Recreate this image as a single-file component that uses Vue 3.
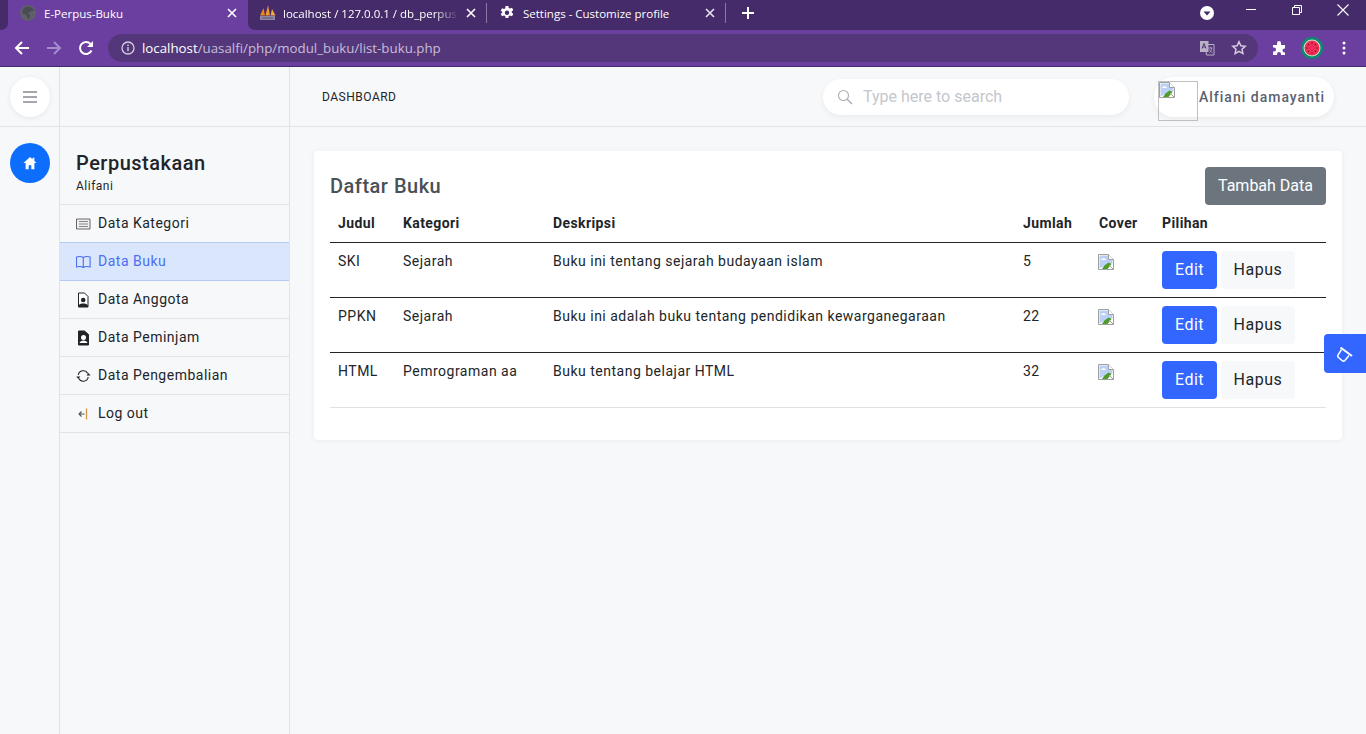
<template>
  <div class="window">
    <div class="tabstrip">
      <div class="stub"></div>
      <div class="tab active">
        <svg class="fav" viewBox="0 0 16 16"><circle cx="8" cy="8" r="8" fill="#5f5f69"/><path d="M8 1.500c3 0 5 2 6 4l-4 1-2 2 2 2-1 4-2-3-1-2-3-1-1-2c1-3 3-5 6-5z" fill="#4b4b55"/></svg>
        <span class="tab-title">E-Perpus-Buku</span>
        <svg class="tab-x" viewBox="0 0 10 10"><path d="M1 1l8 8M9 1l-8 8" stroke="#fff" stroke-width="1.6"/></svg>
      </div>
      <div class="tabs-rest">
        <div class="tab">
          <svg class="fav wide" viewBox="0 0 17 16"><path d="M1 10.500L4.500 3l1.500 7.500z" fill="#e8871e"/><path d="M6.500 10.500L9 0l2 10.500z" fill="#f39a2a"/><path d="M11.500 10.500L13 4l3.500 6.500z" fill="#f6a93c"/><path d="M1 11h15v4H1z" fill="#8f86a0"/><path d="M3 13h11" stroke="#5d5276"/></svg>
          <span class="tab-title fade">localhost / 127.0.0.1 / db_perpus</span>
          <svg class="tab-x" viewBox="0 0 10 10"><path d="M1 1l8 8M9 1l-8 8" stroke="#fff" stroke-width="1.6"/></svg>
        </div>
        <i class="tab-sep"></i>
        <div class="tab">
          <svg class="fav" viewBox="0 0 16 16"><path fill="#fff" fill-rule="evenodd" d="M6.600 1h2.800l.4 2 1.200.6 1.900-.9 1.400 2.400-1.600 1.300v1.200l1.600 1.300-1.400 2.400-1.900-.9-1.200.6-.4 2H6.600l-.4-2-1.200-.6-1.900.9-1.400-2.400 1.600-1.300V6.900L1.700 5.600l1.400-2.400 1.900.9 1.200-.6zM8 5.500a2.200 2.200 0 100 4.400 2.200 2.200 0 000-4.400z"/></svg>
          <span class="tab-title">Settings - Customize profile</span>
          <svg class="tab-x" viewBox="0 0 10 10"><path d="M1 1l8 8M9 1l-8 8" stroke="#e8e4ee" stroke-width="1.6"/></svg>
        </div>
        <i class="tab-sep"></i>
        <svg class="new-tab" viewBox="0 0 12 12"><path d="M6 0v12M0 6h12" stroke="#fff" stroke-width="2"/></svg>
        <div class="caption">
          <svg class="tab-search" viewBox="0 0 14 14"><circle cx="7" cy="7" r="7" fill="#fff"/><path d="M3.500 5.500h7L7 9.500z" fill="#452b69"/></svg>
          <svg class="cap-btn" viewBox="0 0 12 12"><path d="M1 5.500h10" stroke="#fff"/></svg>
          <svg class="cap-btn restore" viewBox="0 0 12 12"><path d="M1.500 3.500h7v7h-7zM3.500 3.500v-2h7v7h-2" fill="none" stroke="#fff"/></svg>
          <svg class="cap-btn close" viewBox="0 0 14 14"><path d="M1.500 1.500l11 11M12.500 1.500l-11 11" stroke="#fff" stroke-width="1.100"/></svg>
        </div>
      </div>
    </div>

    <div class="toolbar">
      <svg class="nav-ico" viewBox="0 0 16 16"><path d="M15 8H2M8 2L2 8l6 6" fill="none" stroke="#fff" stroke-width="2"/></svg>
      <svg class="nav-ico" viewBox="0 0 16 16"><path d="M1 8h13M8 2l6 6-6 6" fill="none" stroke="#a68ccb" stroke-width="2"/></svg>
      <svg class="nav-ico" viewBox="0 0 16 16"><path d="M13.500 10.500A6 6 0 1112.500 4" fill="none" stroke="#fff" stroke-width="2"/><path d="M15 1v6H9z" fill="#fff"/></svg>
      <div class="omnibox">
        <svg class="info" viewBox="0 0 14 14"><circle cx="7" cy="7" r="6" fill="none" stroke="#d6cde2" stroke-width="1.300"/><path d="M7 6v4.200M7 3.500v1.400" stroke="#d6cde2" stroke-width="1.400"/></svg>
        <span class="url"><b>localhost</b>/uasalfi/php/modul_buku/list-buku.php</span>
        <svg class="omni-ico" viewBox="0 0 16 16"><path d="M1 1h8.500v11H1z" fill="#b9afc7"/><path d="M6 4.500h9v10.500H7.500z" fill="none" stroke="#b9afc7"/><path d="M3 8.500l2-5 2 5M3.800 7h2.500" stroke="#54377a" fill="none"/><path d="M9.500 8h4M11.500 7v1M10.500 12.500c1.500-1 2-2.500 2.200-4.500M10.500 9.500c.5 1.500 1.500 2.500 3 3" stroke="#b9afc7" fill="none" stroke-width=".8"/></svg>
        <svg class="omni-ico star" viewBox="0 0 16 16"><path d="M8 1.800l1.900 4 4.300.5-3.200 3 .9 4.300L8 11.400l-3.900 2.200.9-4.300-3.200-3 4.300-.5z" fill="none" stroke="#d6cde2" stroke-width="1.500"/></svg>
      </div>
      <svg class="puzzle" viewBox="0 0 16 16"><path fill="#fff" d="M1 5h4V3a2 2 0 014 0v2h4v3.500h-.5a2 2 0 000 4h.5V15H9v-1a2 2 0 00-4 0v1H1v-3.500h1a2 2 0 000-4H1z"/></svg>
      <svg class="avatar" viewBox="0 0 22 22"><circle cx="11" cy="11" r="11" fill="#0b8a72"/><circle cx="11" cy="11" r="8.500" fill="#cfe8c8"/><circle cx="11" cy="11" r="7.500" fill="#ef2d56"/><g fill="#7a1030"><circle cx="11" cy="6" r=".7"/><circle cx="11" cy="16" r=".7"/><circle cx="6" cy="11" r=".7"/><circle cx="16" cy="11" r=".7"/><circle cx="7.500" cy="7.500" r=".7"/><circle cx="14.500" cy="14.500" r=".7"/><circle cx="14.500" cy="7.500" r=".7"/><circle cx="7.500" cy="14.500" r=".7"/></g></svg>
      <svg class="kebab" viewBox="0 0 4 14"><g fill="#fff"><circle cx="2" cy="2" r="1.500"/><circle cx="2" cy="7" r="1.500"/><circle cx="2" cy="12" r="1.500"/></g></svg>
    </div>

    <div class="page">
      <div class="rail-top">
        <button class="menu-btn">
          <svg viewBox="0 0 14 12" width="14" height="12"><path d="M0 1h14M0 6h14M0 11h14" stroke="#868b94" stroke-width="1.400"/></svg>
        </button>
      </div>
      <div class="side-top"></div>
      <header class="topbar">
        <span class="crumb">DASHBOARD</span>
        <div class="search">
          <svg viewBox="0 0 16 16" width="16" height="16"><circle cx="6.500" cy="6.500" r="5" fill="none" stroke="#a9adb5" stroke-width="1.100"/><path d="M10.200 10.200l4.800 4.800" stroke="#a9adb5" stroke-width="1.300"/></svg>
          <span>Type here to search</span>
        </div>
        <div class="user">
          <span class="user-img"><svg class="broken" viewBox="0 0 16 16"><use href="#broken-img"/></svg></span>
          <span class="user-name">Alfiani damayanti</span>
        </div>
      </header>

      <div class="rail">
        <span class="home">
          <svg viewBox="0 0 16 16" width="14" height="14"><path fill="#fff" d="M8 1l3 2.800V2h2v3.700l2.500 2.300H13v7H9.500v-4.500h-3V15H3V8H.5z"/></svg>
        </span>
      </div>

      <aside class="sidebar">
        <div class="brand">
          <h1>Perpustakaan</h1>
          <small>Alifani</small>
        </div>
        <a v-for="m in menu" :key="m.label" class="menu-item" :class="{ on: m.on }">
          <svg viewBox="0 0 16 16" width="16" height="16" v-html="m.icon"></svg>
          <span>{{ m.label }}</span>
        </a>
      </aside>

      <main class="content">
        <section class="card">
          <div class="card-head">
            <h2>Daftar Buku</h2>
            <button class="btn grey">Tambah Data</button>
          </div>
          <table>
            <colgroup>
              <col style="width: 65px" /><col style="width: 150px" /><col style="width: 470px" /><col style="width: 76px" /><col style="width: 63px" /><col />
            </colgroup>
            <thead>
              <tr><th>Judul</th><th>Kategori</th><th>Deskripsi</th><th>Jumlah</th><th>Cover</th><th>Pilihan</th></tr>
            </thead>
            <tbody>
              <tr v-for="b in books" :key="b.judul">
                <td>{{ b.judul }}</td>
                <td>{{ b.kategori }}</td>
                <td>{{ b.deskripsi }}</td>
                <td>{{ b.jumlah }}</td>
                <td><svg class="broken cover" viewBox="0 0 16 16"><use href="#broken-img"/></svg></td>
                <td class="actions">
                  <button class="btn blue">Edit</button>
                  <button class="btn light">Hapus</button>
                </td>
              </tr>
            </tbody>
          </table>
        </section>
      </main>
    </div>

    <button class="paint">
      <svg viewBox="0 0 16 16" width="16" height="16"><path d="M4.500 3.500L1 9.200q-.7 1.300.5 2.300l3.800 3.200q1.400 1 2.600-.3L12 9.500" fill="none" stroke="#fff" stroke-width="1.500"/><path d="M3.500 1.500L15 10" stroke="#fff" stroke-width="2"/></svg>
    </button>

    <svg width="0" height="0" class="defs">
      <symbol id="broken-img" viewBox="0 0 16 16">
        <path d="M.5.5h10l5 5v10H.5z" fill="#fff" stroke="#a0a0a0"/>
        <path d="M1.500 1.500h9v4h4v4l-5 1-8 4z" fill="#bcd0f5"/>
        <path d="M3 6c1-2.500 4-2.500 5 0z" fill="#fff"/>
        <path d="M4 15l2.500-3.500 4-3 3 1.500-4 5z" fill="#4f9a28"/>
        <path d="M11 11l4 4" stroke="#a0a0a0"/>
        <path d="M10.500.5v5h5" fill="#fff" stroke="#a0a0a0"/>
      </symbol>
    </svg>
  </div>
</template>

<script setup>
const menu = [
  {
    label: "Data Kategori",
    icon: '<path d="M.5 3h13.500v10H.5z" fill="#eee" stroke="#6b6470"/><path d="M3 5.500h9M3 8h9M3 10.500h9" stroke="#8a8590"/>',
  },
  {
    label: "Data Buku",
    on: true,
    icon: '<path d="M7.300 3.500C6 2.700 2.500 2.500.5 3v10c2-.5 5.500-.3 6.800.5 1.300-.8 4.800-1 6.800-.5V3c-2-.5-5.500-.3-6.800.5zM7.300 3.500v10" fill="none" stroke="#4c6ef5" stroke-width="1.100"/>',
  },
  {
    label: "Data Anggota",
    icon: '<path d="M2.500 1h6l3.500 3.500V15h-9.500z" fill="#fff" stroke="#212529"/><circle cx="7.200" cy="8" r="2.300" fill="#212529"/><path d="M2.500 15v-1.500c1-1.500 2.500-2 4.700-2s3.800.5 4.800 2V15z" fill="#212529"/>',
  },
  {
    label: "Data Peminjam",
    icon: '<path d="M2.500 1h6l4 3.500V15h-10z" fill="#212529" stroke="#212529"/><circle cx="7.500" cy="7.500" r="2.500" fill="#fff"/><path d="M3.500 13c.5-1.500 2-2.500 4-2.500s3.500 1 4 2.500z" fill="#fff"/>',
  },
  {
    label: "Data Pengembalian",
    icon: '<path d="M2.300 7a5 5 0 019.400-1.500M12.200 9a5 5 0 01-9.400 1.500" fill="none" stroke="#212529" stroke-width="1.100"/><path d="M10.500 7.500h4l-2-2.500zM.3 8.500h4l-2 2.500z" fill="#212529"/>',
  },
  {
    label: "Log out",
    icon: '<path d="M10.500 2.500v11" stroke="#d8954a" stroke-width="1.300"/><path d="M8.500 8H3M5.500 5.500L3 8l2.500 2.500" fill="none" stroke="#555" stroke-width="1.100"/>',
  },
];

const books = [
  { judul: "SKI", kategori: "Sejarah", deskripsi: "Buku ini tentang sejarah budayaan islam", jumlah: 5 },
  { judul: "PPKN", kategori: "Sejarah", deskripsi: "Buku ini adalah buku tentang pendidikan kewarganegaraan", jumlah: 22 },
  { judul: "HTML", kategori: "Pemrograman aa", deskripsi: "Buku tentang belajar HTML", jumlah: 32 },
];
</script>

<style>
html,
body {
  margin: 0;
  background: #f7f8fa;
}
</style>

<style scoped>
.window {
  position: relative;
  display: flex;
  flex-direction: column;
  height: 100vh;
  overflow: hidden;
  font-family: Roboto, "Liberation Sans", sans-serif;
  font-size: 14px;
  letter-spacing: 0.5px;
  line-height: 21px;
  color: #212529;
  background: #f7f8fa;
}
.defs {
  position: absolute;
}

.tabstrip {
  display: flex;
  flex: none;
  height: 30px;
  background: #6b3fa0;
  font-family: "Open Sans", "Liberation Sans", sans-serif;
  font-size: 11.5px;
  letter-spacing: 0;
  color: #fff;
}
.stub {
  width: 8px;
  background: #452b69;
  border-bottom-right-radius: 7px;
}
.tab {
  display: flex;
  align-items: center;
  flex: none;
  width: 238px;
  height: 30px;
  padding: 0 10px 4px 12px;
  box-sizing: border-box;
}
.tab.active {
  width: 240px;
  padding-right: 11px;
}
.tab-title {
  flex: 1;
  min-width: 0;
  margin-left: 8px;
  white-space: nowrap;
}
.tab-title.fade {
  margin-right: -5px;
  overflow: hidden;
  -webkit-mask-image: linear-gradient(90deg, #000 86%, transparent);
  mask-image: linear-gradient(90deg, #000 86%, transparent);
}
.fav {
  flex: none;
  width: 16px;
  height: 16px;
}
.fav.wide {
  width: 17px;
  margin-right: -1px;
  margin-left: -1px;
}
.tab-x {
  flex: none;
  width: 10px;
  height: 10px;
  margin-left: 12px;
}
.tabs-rest {
  flex: 1;
  display: flex;
  align-items: center;
  padding-bottom: 4px;
  height: 30px;
  box-sizing: border-box;
  background: #452b69;
  border-bottom-left-radius: 7px;
}
.tabs-rest .tab {
  height: 26px;
  padding-bottom: 0;
}
.tab-sep {
  flex: none;
  width: 1px;
  height: 20px;
  background: #8b77a8;
}
.new-tab {
  width: 12px;
  height: 12px;
  margin-left: 16px;
}
.caption {
  display: flex;
  align-items: center;
  margin-left: auto;
}
.tab-search {
  width: 14px;
  height: 14px;
  margin-right: 31px;
}
.cap-btn {
  width: 12px;
  height: 12px;
  margin-right: 34px;
  margin-top: -6px;
}
.cap-btn.restore {
  margin-right: 33px;
}
.cap-btn.close {
  width: 14px;
  height: 14px;
  margin-right: 16px;
}

.toolbar {
  display: flex;
  align-items: center;
  flex: none;
  height: 37px;
  box-sizing: border-box;
  padding: 0 0 1px 14px;
  background: #6b3fa0;
  border-bottom: 1px solid #452b69;
}
.nav-ico {
  flex: none;
  width: 16px;
  height: 16px;
  margin-right: 16px;
}
.omnibox {
  display: flex;
  align-items: center;
  flex: none;
  width: 1150px;
  height: 28px;
  margin-left: -2px;
  padding: 0 11px 0 13px;
  box-sizing: border-box;
  border-radius: 14px;
  background: #54377a;
  font-family: "Open Sans", "Liberation Sans", sans-serif;
  font-size: 13.3px;
  letter-spacing: 0;
  color: #c9bdd9;
}
.info {
  flex: none;
  width: 14px;
  height: 14px;
  margin-right: 7px;
}
.url {
  flex: 1;
  padding-top: 1px;
}
.url b {
  font-weight: 400;
  color: #fff;
}
.omni-ico {
  width: 16px;
  height: 16px;
}
.star {
  margin-left: 16px;
}
.puzzle {
  width: 16px;
  height: 16px;
  margin-left: 14px;
}
.avatar {
  width: 22px;
  height: 22px;
  margin-left: 13px;
}
.kebab {
  width: 4px;
  height: 14px;
  margin-left: 19px;
}

.page {
  flex: 1;
  display: grid;
  grid-template-columns: 60px 230px 1fr;
  grid-template-rows: 60px 1fr;
  min-height: 0;
}
.rail-top,
.side-top,
.rail,
.sidebar {
  box-sizing: border-box;
  border-right: 1px solid #e1e3e8;
}
.rail-top,
.side-top,
.topbar {
  box-sizing: border-box;
  border-bottom: 1px solid #e1e3e8;
}
.rail-top {
  padding: 10px;
}
.menu-btn {
  display: flex;
  align-items: center;
  justify-content: center;
  width: 40px;
  height: 40px;
  padding: 0;
  border: 0;
  border-radius: 50%;
  background: #fff;
  box-shadow: 0 1px 5px rgba(0, 0, 0, 0.08);
}
.topbar {
  display: flex;
  align-items: center;
  padding: 0 32px;
}
.crumb {
  padding-top: 2px;
  font-size: 12px;
  color: #212529;
}
.search {
  display: flex;
  align-items: center;
  gap: 10px;
  width: 306px;
  height: 36px;
  margin-left: auto;
  padding: 0 14px;
  box-sizing: border-box;
  border-radius: 18px;
  background: #fff;
  box-shadow: 0 2px 6px rgba(0, 0, 0, 0.06);
  font-size: 16px;
  letter-spacing: 0;
  color: #c4c7cc;
}
.user {
  display: flex;
  align-items: flex-start;
  width: 180px;
  height: 40px;
  margin-left: 25px;
  padding-left: 4px;
  box-sizing: border-box;
  border-radius: 20px;
  background: #fff;
  box-shadow: 0 2px 6px rgba(0, 0, 0, 0.06);
}
.user-img {
  flex: none;
  width: 40px;
  height: 40px;
  margin-top: 4px;
  box-sizing: border-box;
  border: 1px solid #c0c0c0;
}
.broken {
  display: block;
  width: 16px;
  height: 16px;
}
.user-name {
  margin-left: 1px;
  line-height: 40px;
  font-weight: 500;
  letter-spacing: 1px;
  color: #5a6270;
}

.rail {
  padding: 16px 10px;
}
.home {
  display: flex;
  align-items: center;
  justify-content: center;
  width: 40px;
  height: 40px;
  border-radius: 50%;
  background: #0d6efd;
}
.brand {
  height: 78px;
  padding: 24px 16px 0;
  box-sizing: border-box;
  border-bottom: 1px solid #e1e3e8;
}
.brand h1 {
  margin: 0;
  font-size: 20px;
  font-weight: 500;
  line-height: 24px;
}
.brand small {
  display: block;
  margin-top: 2px;
  font-size: 12px;
  line-height: 18px;
}
.menu-item {
  display: flex;
  align-items: center;
  gap: 6px;
  height: 38px;
  padding: 0 16px;
  box-sizing: border-box;
  border-bottom: 1px solid #e1e3e8;
}
.menu-item.on {
  margin-top: -1px;
  height: 39px;
  background: #d9e6fb;
  border-top: 1px solid #b7ccf5;
  border-bottom-color: #b7ccf5;
  color: #4c6ef5;
}

.content {
  padding: 24px;
  min-width: 0;
}
.card {
  padding: 16px;
  border-radius: 4px;
  background: #fff;
  box-shadow: 0 1px 6px rgba(0, 0, 0, 0.05);
}
.card-head {
  display: flex;
  align-items: center;
  justify-content: space-between;
  height: 38px;
}
.card-head h2 {
  margin: 0;
  font-size: 20px;
  font-weight: 500;
  color: #495057;
}
table {
  width: 100%;
  margin-bottom: 16px;
  border-collapse: collapse;
  table-layout: fixed;
}
th,
td {
  padding: 8px;
  text-align: left;
  vertical-align: top;
  border-bottom: 1px solid #212529;
}
th {
  font-weight: 700;
  letter-spacing: 0.4px;
}
tbody tr:last-child td {
  border-bottom-color: #dee2e6;
}
.cover {
  margin-top: 3px;
  margin-left: -1px;
}
.actions {
  white-space: nowrap;
}
.btn {
  height: 38px;
  padding: 0 12px 2px;
  border: 0;
  border-radius: 4px;
  font: inherit;
  font-size: 16px;
  letter-spacing: 0.5px;
}
.btn.grey {
  padding: 0 13px 2px;
  background: #6c757d;
  color: #fff;
  letter-spacing: 0;
}
.btn.blue {
  padding: 0 13px 2px;
  background: #3366ff;
  color: #fff;
}
.btn.light {
  margin-left: 4px;
  padding: 0 12.500px 2px;
  background: #f7f8fa;
  color: #212529;
}
.paint {
  position: absolute;
  right: 0;
  top: 334px;
  display: flex;
  align-items: center;
  justify-content: center;
  width: 42px;
  height: 39px;
  padding: 0;
  border: 0;
  border-radius: 4px 0 0 4px;
  background: #3366ff;
}
</style>
